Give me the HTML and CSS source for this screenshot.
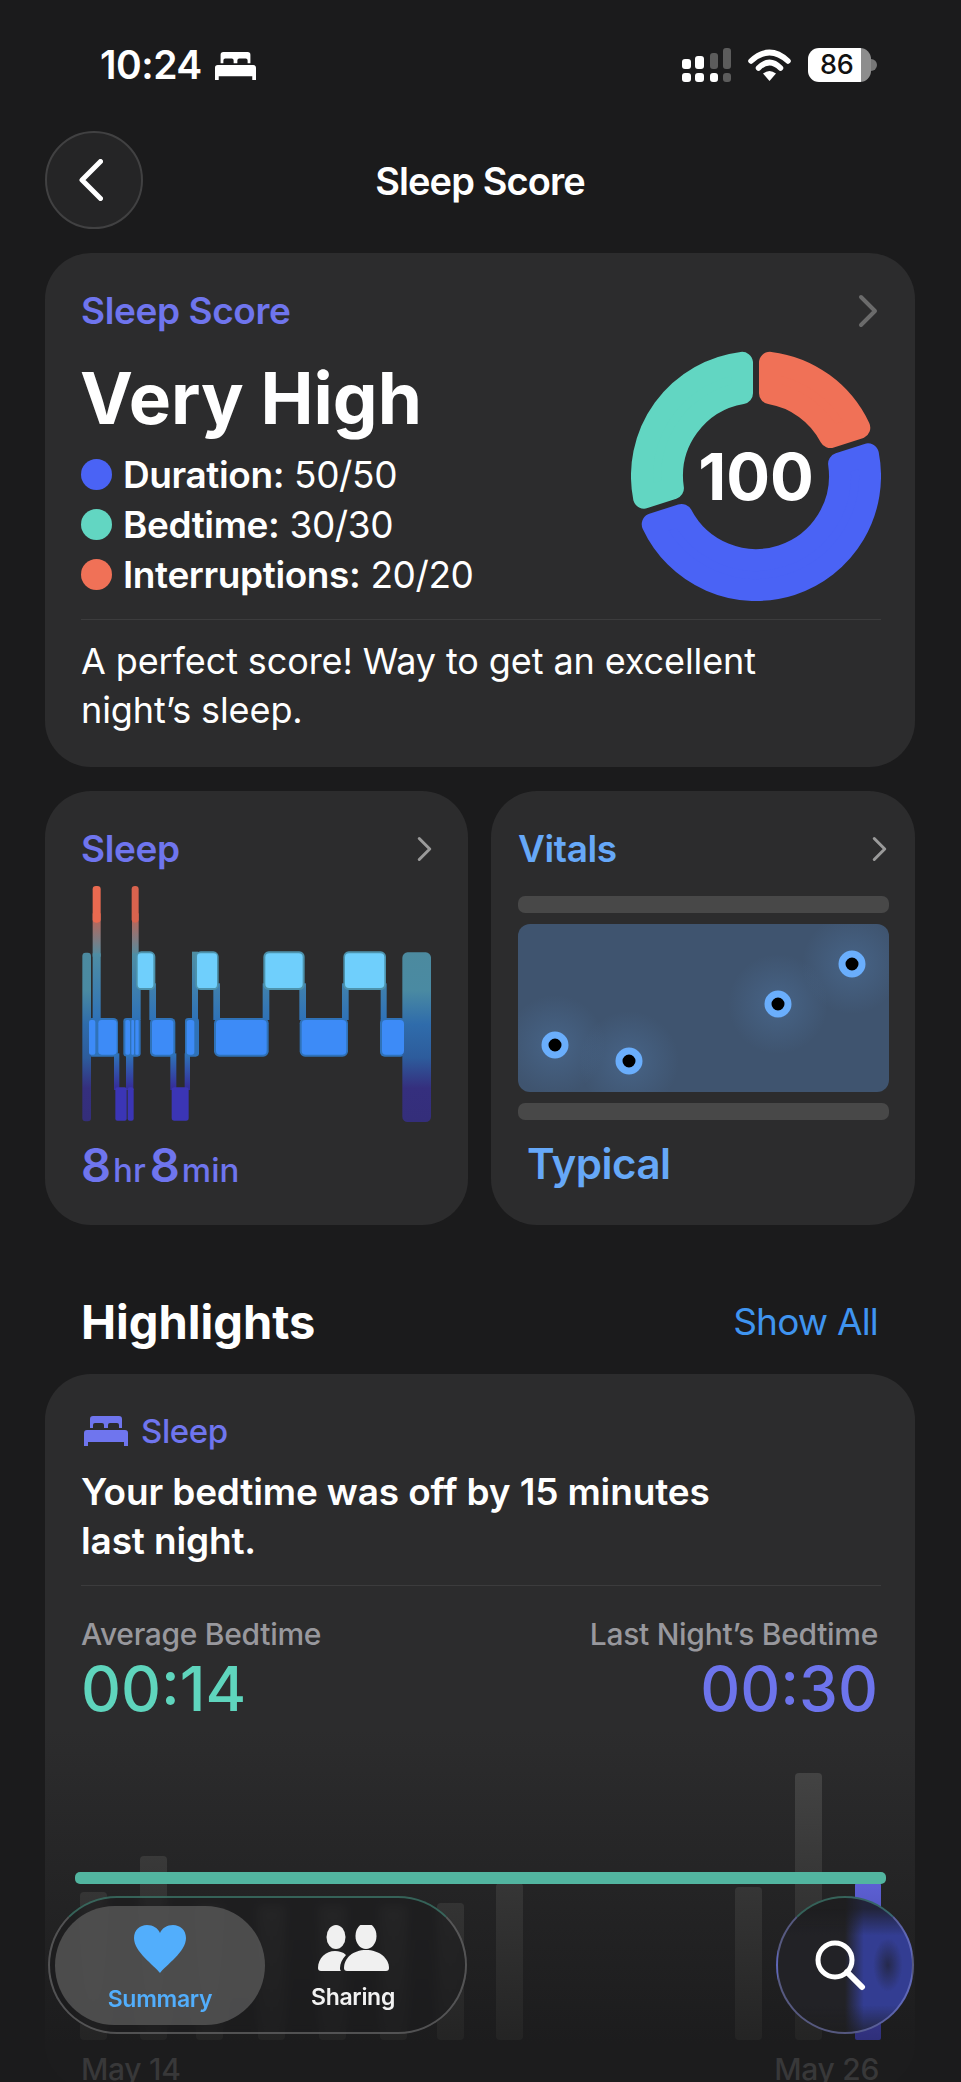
FILE: index.html
```html
<!DOCTYPE html>
<html lang="en">
<head>
    <meta charset="UTF-8">
    <meta name="viewport" content="width=device-width, initial-scale=1.0">
    <title>Sleep Score</title>
    <link rel="stylesheet" href="styles.css">
</head>
<body>
<svg class="icon-defs" width="0" height="0">
    <symbol id="bed" viewBox="0 0 44 30">
        <path d="M6 3a3 3 0 0 1 3-3h26a3 3 0 0 1 3 3v9h-3V9a2 2 0 0 0-2-2h-7a2 2 0 0 0-2 2v3h-4V9a2 2 0 0 0-2-2h-7a2 2 0 0 0-2 2v3H6z"/>
        <path d="M3 14h38a3 3 0 0 1 3 3v13h-4v-4H4v4H0V17a3 3 0 0 1 3-3z"/>
    </symbol>
    <symbol id="chevron" viewBox="0 0 20 34">
        <path d="M3 3l14 14L3 31" fill="none" stroke="currentColor" stroke-width="4" stroke-linecap="round" stroke-linejoin="round"/>
    </symbol>
</svg>

<div class="page">
    <div class="status-bar">
        <div class="status-left">
            <span class="clock">10:24</span>
            <svg class="status-bed"><use href="#bed"/></svg>
        </div>
        <div class="status-right">
            <svg class="signal" viewBox="0 0 49 34">
                <rect x="0" y="11" width="9" height="10" rx="3" fill="#fff"/>
                <rect x="13" y="8" width="9" height="13" rx="3" fill="#fff"/>
                <rect x="28" y="5" width="8" height="16" rx="3" fill="#5c5c5c"/>
                <rect x="41" y="0" width="8" height="21" rx="3" fill="#5c5c5c"/>
                <rect x="0" y="25" width="9" height="9" rx="3" fill="#fff"/>
                <rect x="13" y="25" width="9" height="9" rx="3" fill="#fff"/>
                <rect x="28" y="25" width="8" height="9" rx="3" fill="#fff"/>
                <rect x="41" y="25" width="8" height="9" rx="3" fill="#5c5c5c"/>
            </svg>
            <svg class="wifi" viewBox="0 0 43 32">
                <path d="M3 12Q21.500 -5 40 12" fill="none" stroke="#fff" stroke-width="5.500" stroke-linecap="round"/>
                <path d="M10.500 19Q21.500 8 32.500 19" fill="none" stroke="#fff" stroke-width="5.500" stroke-linecap="round"/>
                <path d="M21.500 32L15 24.500Q21.500 19.500 28 24.500Z" fill="#fff"/>
            </svg>
            <div class="battery">
                <div class="battery-body">86</div>
                <div class="battery-nub"></div>
            </div>
        </div>
    </div>

    <div class="nav">
        <div class="back-button">
            <svg width="24" height="42" viewBox="0 0 24 42"><path d="M21.500 2.500L3 21l18.500 18.500" fill="none" stroke="#fff" stroke-width="5" stroke-linecap="round" stroke-linejoin="round"/></svg>
        </div>
        <div class="nav-title">Sleep Score</div>
    </div>

    <section class="card score-card">
        <div class="card-head">
            <span class="card-label purple">Sleep Score</span>
            <svg class="chevron-big"><use href="#chevron"/></svg>
        </div>
        <div class="score-row">
            <div class="score-info">
                <div class="score-title">Very High</div>
                <div class="legend-row"><span class="dot dot-blue"></span><b>Duration:</b> 50/50</div>
                <div class="legend-row"><span class="dot dot-teal"></span><b>Bedtime:</b> 30/30</div>
                <div class="legend-row"><span class="dot dot-orange"></span><b>Interruptions:</b> 20/20</div>
            </div>
            <div class="ring">
                <svg width="250" height="250" viewBox="0 0 250 250" stroke-width="22" stroke-linejoin="round">
                    <path fill="#62d6c2" stroke="#62d6c2" d="M13.070 146.660A114 114 0 0 1 111.010 11.860L111.010 42.180A84 84 0 0 0 41.910 137.280Z"/>
                    <path fill="#f07157" stroke="#f07157" d="M138.990 11.860A114 114 0 0 1 228.270 76.730L199.450 86.090A84 84 0 0 0 138.990 42.180Z"/>
                    <path fill="#4a63f5" stroke="#4a63f5" d="M236.930 103.340A114 114 0 0 1 21.730 173.270L50.550 163.910A84 84 0 0 0 208.090 112.720Z"/>
                </svg>
                <div class="ring-value">100</div>
            </div>
        </div>
        <div class="divider score-divider"></div>
        <p class="score-text">A perfect score! Way to get an excellent<br>night’s sleep.</p>
    </section>

    <div class="tiles">
        <section class="card tile sleep-tile">
            <div class="card-head tile-head">
                <span class="card-label purple">Sleep</span>
                <svg class="chevron-small"><use href="#chevron"/></svg>
            </div>
            <svg class="hypnogram" width="380" height="270" viewBox="0 0 1140 810">
                <defs>
                    <linearGradient id="link-top" gradientUnits="userSpaceOnUse" x1="0" y1="250" x2="0" y2="450">
                        <stop offset="0" stop-color="#4f8ea3"/>
                        <stop offset="1" stop-color="#2f72b8"/>
                    </linearGradient>
                    <linearGradient id="link-low" gradientUnits="userSpaceOnUse" x1="0" y1="555" x2="0" y2="650">
                        <stop offset="0" stop-color="#2f72b8"/>
                        <stop offset="1" stop-color="#35309a"/>
                    </linearGradient>
                    <linearGradient id="link-wake" gradientUnits="userSpaceOnUse" x1="0" y1="130" x2="0" y2="260">
                        <stop offset="0" stop-color="#c9604e"/>
                        <stop offset="1" stop-color="#4f8ea3"/>
                    </linearGradient>
                    <linearGradient id="side-col" gradientUnits="userSpaceOnUse" x1="0" y1="250" x2="0" y2="755">
                        <stop offset="0" stop-color="#4c8a9f"/>
                        <stop offset=".22" stop-color="#4a8aa2"/>
                        <stop offset=".42" stop-color="#2f6cab"/>
                        <stop offset=".62" stop-color="#2d5c9c"/>
                        <stop offset=".8" stop-color="#352f7e"/>
                        <stop offset="1" stop-color="#342e7a"/>
                    </linearGradient>
                </defs>
                <!-- stage changes -->
                <g fill="url(#link-wake)">
                    <rect x="68" y="130" width="24" height="130"/>
                    <rect x="186" y="130" width="20" height="130"/>
                </g>
                <g fill="url(#link-top)">
                    <rect x="68" y="250" width="24" height="200"/>
                    <rect x="186" y="250" width="26" height="200"/>
                    <rect x="238" y="340" width="20" height="110"/>
                    <rect x="366" y="245" width="18" height="205"/>
                    <rect x="430" y="340" width="20" height="110"/>
                    <rect x="578" y="340" width="20" height="110"/>
                    <rect x="688" y="340" width="20" height="110"/>
                    <rect x="816" y="340" width="20" height="110"/>
                    <rect x="932" y="340" width="18" height="110"/>
                </g>
                <g fill="url(#link-low)">
                    <rect x="132" y="550" width="16" height="110"/>
                    <rect x="168" y="550" width="22" height="110"/>
                    <rect x="301" y="550" width="18" height="110"/>
                    <rect x="344" y="550" width="16" height="110"/>
                </g>
                <!-- halos round the blocks -->
                <g fill="#4d93ad">
                    <rect x="198" y="244" width="58" height="116" rx="16"/>
                    <rect x="376" y="244" width="70" height="116" rx="16"/>
                    <rect x="580" y="244" width="124" height="116" rx="16"/>
                    <rect x="820" y="244" width="128" height="116" rx="16"/>
                </g>
                <g fill="#2f72b8">
                    <rect x="52" y="444" width="92" height="116" rx="14"/>
                    <rect x="160" y="444" width="52" height="116" rx="10"/>
                    <rect x="240" y="444" width="76" height="116" rx="14"/>
                    <rect x="345" y="444" width="42" height="116" rx="10"/>
                    <rect x="432" y="444" width="164" height="116" rx="16"/>
                    <rect x="689" y="444" width="145" height="116" rx="16"/>
                    <rect x="930" y="444" width="76" height="116" rx="14"/>
                </g>
                <!-- stages -->
                <rect x="37" y="248" width="26" height="506" rx="10" fill="url(#side-col)"/>
                <rect x="997" y="247" width="86" height="509" rx="16" fill="url(#side-col)"/>
                <rect x="68" y="48" width="24" height="110" rx="10" fill="#ea6a50"/>
                <rect x="185" y="48" width="21" height="110" rx="10" fill="#d9634e"/>
                <g fill="#6fcffc">
                    <rect x="203" y="250" width="47" height="104" rx="10"/>
                    <rect x="381" y="250" width="60" height="104" rx="10"/>
                    <rect x="586" y="250" width="112" height="104" rx="12"/>
                    <rect x="825" y="250" width="118" height="104" rx="12"/>
                </g>
                <g fill="#3d8bf7">
                    <rect x="57" y="450" width="19" height="104" rx="6"/>
                    <rect x="85" y="450" width="55" height="104" rx="10"/>
                    <rect x="166" y="450" width="14" height="104" rx="5"/>
                    <rect x="184" y="450" width="8" height="104" rx="3"/>
                    <rect x="196" y="450" width="10" height="104" rx="3"/>
                    <rect x="246" y="450" width="64" height="104" rx="10"/>
                    <rect x="350" y="450" width="23" height="104" rx="8"/>
                    <rect x="438" y="450" width="152" height="104" rx="12"/>
                    <rect x="695" y="450" width="134" height="104" rx="12"/>
                    <rect x="936" y="450" width="66" height="104" rx="12"/>
                </g>
                <g fill="#3b35b5">
                    <rect x="136" y="652" width="34" height="100" rx="6"/>
                    <rect x="173" y="652" width="18" height="100" rx="6"/>
                    <rect x="305" y="652" width="51" height="100" rx="8"/>
                </g>
            </svg>
            <div class="duration purple"><span class="num">8</span><span class="unit">hr</span> <span class="num">8</span><span class="unit">min</span></div>
        </section>

        <section class="card tile vitals-tile">
            <div class="card-head tile-head">
                <span class="card-label sky">Vitals</span>
                <svg class="chevron-small"><use href="#chevron"/></svg>
            </div>
            <div class="range-bar"></div>
            <svg class="vitals-plot" width="371" height="168" viewBox="0 0 371 168">
                <defs>
                    <radialGradient id="glow">
                        <stop offset="0" stop-color="#5b8cc4" stop-opacity=".28"/>
                        <stop offset="1" stop-color="#5b8cc4" stop-opacity="0"/>
                    </radialGradient>
                    <clipPath id="plot-clip"><rect width="371" height="168" rx="12"/></clipPath>
                </defs>
                <rect width="371" height="168" rx="12" fill="#3f546f"/>
                <g clip-path="url(#plot-clip)" fill="url(#glow)">
                    <circle cx="37" cy="121" r="50"/>
                    <circle cx="111" cy="137" r="50"/>
                    <circle cx="260" cy="80" r="50"/>
                    <circle cx="334" cy="40" r="50"/>
                </g>
                <g fill="#000" stroke="#6aaefc" stroke-width="7">
                    <circle cx="37" cy="121" r="10"/>
                    <circle cx="111" cy="137" r="10"/>
                    <circle cx="260" cy="80" r="10"/>
                    <circle cx="334" cy="40" r="10"/>
                </g>
            </svg>
            <div class="range-bar range-bar-low"></div>
            <div class="vitals-state sky">Typical</div>
        </section>
    </div>

    <div class="section-head">
        <h2>Highlights</h2>
        <span class="show-all">Show All</span>
    </div>

    <section class="card highlight-card">
        <div class="highlight-tag purple">
            <svg class="tag-bed"><use href="#bed"/></svg>
            <span>Sleep</span>
        </div>
        <p class="highlight-title">Your bedtime was off by 15 minutes<br>last night.</p>
        <div class="divider highlight-divider"></div>
        <div class="compare-row">
            <div>
                <div class="compare-label">Average Bedtime</div>
                <div class="compare-value teal">00:14</div>
            </div>
            <div class="compare-right">
                <div class="compare-label">Last Night’s Bedtime</div>
                <div class="compare-value violet">00:30</div>
            </div>
        </div>
        <svg class="bed-chart" width="820" height="322" viewBox="0 0 820 322">
            <defs>
                <linearGradient id="bar-gray" gradientUnits="userSpaceOnUse" x1="0" y1="49" x2="0" y2="316">
                    <stop offset="0" stop-color="#434343"/>
                    <stop offset=".5" stop-color="#333333"/>
                    <stop offset="1" stop-color="#242424"/>
                </linearGradient>
                <linearGradient id="bar-blue" gradientUnits="userSpaceOnUse" x1="0" y1="159" x2="0" y2="316">
                    <stop offset="0" stop-color="#5d60d4"/>
                    <stop offset="1" stop-color="#2f2f7a"/>
                </linearGradient>
            </defs>
            <g fill="url(#bar-gray)">
                <rect x="10" y="168" width="27" height="148" rx="4"/>
                <rect x="70" y="132" width="27" height="184" rx="4"/>
                <rect x="126" y="181" width="27" height="135" rx="4"/>
                <rect x="188" y="181" width="27" height="135" rx="4"/>
                <rect x="249" y="181" width="27" height="135" rx="4"/>
                <rect x="310" y="181" width="27" height="135" rx="4"/>
                <rect x="367" y="179" width="27" height="137" rx="4"/>
                <rect x="426" y="159" width="27" height="157" rx="4"/>
                <rect x="665" y="163" width="27" height="153" rx="4"/>
                <rect x="725" y="49" width="27" height="267" rx="4"/>
            </g>
            <rect x="785" y="159" width="26" height="157" rx="2" fill="url(#bar-blue)"/>
            <rect x="5" y="148" width="811" height="12" rx="5" fill="#52b5a0"/>
        </svg>
        <div class="chart-dates">
            <span>May 14</span>
            <span>May 26</span>
        </div>
    </section>

    <nav class="tab-bar">
        <div class="tab tab-active">
            <svg width="52" height="48" viewBox="0 0 52 48"><path fill="#52aefc" d="M26 48C20 40 0 27 0 13 0 5 6 0 13 0c6 0 11 3 13 8 2-5 7-8 13-8 7 0 13 5 13 13 0 14-20 27-26 35z"/></svg>
            <span>Summary</span>
        </div>
        <div class="tab tab-sharing">
            <svg width="71" height="46" viewBox="0 0 71 46" fill="#f0f0f0">
                <ellipse cx="18" cy="12" rx="9.500" ry="12"/>
                <ellipse cx="48" cy="11" rx="10.500" ry="13"/>
                <path d="M3 46c-2 0-3-1-3-3 0-10 8-17 17-17 4 0 8 1 11 4-4 4-6 9-6 13 0 1 0 2 1 3z"/>
                <path d="M29 46c-2 0-3-1-3-3 0-10 9-18 22-18s23 8 23 18c0 2-1 3-3 3z"/>
            </svg>
            <span>Sharing</span>
        </div>
    </nav>
    <div class="search-button">
        <svg width="52" height="52" viewBox="0 0 52 52"><circle cx="21" cy="21" r="17" fill="none" stroke="#fff" stroke-width="5"/><path d="M33 33l15 15" fill="none" stroke="#fff" stroke-width="6" stroke-linecap="round"/></svg>
    </div>
</div>
</body>
</html>
```

FILE: styles.css
```css
* {
    margin: 0;
    padding: 0;
    box-sizing: border-box;
}

html, body {
    height: 2082px;
    overflow: hidden;
}

body {
    font-family: 'Inter', 'Noto Sans', sans-serif;
    background-color: #1b1b1c;
    color: #fff;
}

.icon-defs {
    display: block;
    position: absolute;
}

.page {
    position: relative;
    height: 2082px;
    padding: 47px 46px 0 45px;
    overflow: hidden;
}

/* status bar */
.status-bar {
    display: flex;
    justify-content: space-between;
    align-items: center;
    height: 36px;
    padding: 0 38px 0 55px;
}

.status-left {
    display: flex;
    align-items: center;
    gap: 13px;
}

.clock {
    font-size: 39px;
    font-weight: 600;
    letter-spacing: -.5px;
    line-height: 36px;
}

.status-bed {
    width: 41px;
    height: 28px;
    fill: #fff;
    margin-top: 2px;
}

.status-right {
    display: flex;
    align-items: center;
}

.signal {
    width: 49px;
    height: 34px;
}

.wifi {
    width: 43px;
    height: 32px;
    margin-left: 17px;
}

.battery {
    display: flex;
    align-items: center;
    margin-left: 17px;
}

.battery-body {
    width: 63px;
    height: 34px;
    border-radius: 11px;
    background: linear-gradient(90deg, #fff 0, #fff 84%, #8d8d8d 84%);
    color: #111;
    font-size: 27px;
    font-weight: 500;
    line-height: 34px;
    padding-left: 12px;
    letter-spacing: -.3px;
}

.battery-nub {
    width: 6px;
    height: 12px;
    border-radius: 0 6px 6px 0;
    background-color: #777;
}

/* nav */
.nav {
    display: grid;
    grid-template-columns: 98px 1fr 98px;
    align-items: center;
    margin-top: 48px;
}

.back-button {
    grid-column: 1;
    grid-row: 1;
    width: 98px;
    height: 98px;
    border-radius: 50%;
    background-color: #252526;
    border: 2px solid #414142;
    display: flex;
    align-items: center;
    justify-content: center;
    padding-right: 6px;
}

.nav-title {
    grid-column: 2;
    grid-row: 1;
    text-align: center;
    font-size: 38px;
    font-weight: 600;
    letter-spacing: -.9px;
    padding-top: 2px;
}

/* cards */
.card {
    background-color: #2c2c2d;
    border-radius: 46px;
}

.score-card {
    margin-top: 24px;
    padding: 38px 34px 29px 36px;
}

.card-head {
    display: flex;
    justify-content: space-between;
    align-items: center;
    height: 40px;
}

.card-label {
    font-size: 37px;
    font-weight: 600;
    letter-spacing: -.4px;
    line-height: 40px;
}

.purple {
    color: #6f75ee;
}

.sky {
    color: #66a8f8;
}

.teal {
    color: #5fd5bd;
}

.violet {
    color: #6d74ec;
}

.chevron-big {
    width: 20px;
    height: 34px;
    color: #6b6b6b;
    margin-right: 3px;
}

.chevron-small {
    width: 15px;
    height: 26px;
    color: #9a9a9a;
}

.score-row {
    display: flex;
    justify-content: space-between;
    margin-top: 20px;
}

.score-title {
    font-size: 71px;
    font-weight: 700;
    line-height: 72px;
    margin-top: 11px;
    margin-bottom: 15px;
    margin-left: -1px;
}

.legend-row {
    display: flex;
    align-items: center;
    height: 50px;
    font-size: 37px;
    font-weight: 400;
    letter-spacing: -.4px;
    white-space: pre;
}

.legend-row b {
    font-weight: 600;
}

.dot {
    width: 31px;
    height: 31px;
    border-radius: 50%;
    margin-right: 11px;
}

.dot-blue {
    background-color: #4a63f5;
}

.dot-teal {
    background-color: #62d6c2;
}

.dot-orange {
    background-color: #f07157;
}

.ring {
    position: relative;
    width: 250px;
    height: 250px;
}

.ring-value {
    position: absolute;
    inset: 0;
    display: flex;
    align-items: center;
    justify-content: center;
    font-size: 65px;
    font-weight: 700;
}

.divider {
    height: 1px;
    background-color: #3c3c3d;
}

.score-divider {
    margin-top: 18px;
}

.score-text {
    margin-top: 17px;
    margin-bottom: 3px;
    font-size: 36px;
    line-height: 49px;
    letter-spacing: -.1px;
}

/* tiles */
.tiles {
    display: grid;
    grid-template-columns: 423px 424px;
    gap: 23px;
    margin-top: 24px;
}

.tile {
    height: 434px;
    padding-top: 38px;
}

.sleep-tile {
    padding-left: 36px;
    padding-right: 36px;
}

.vitals-tile {
    padding-left: 27px;
    padding-right: 26px;
}

.vitals-tile .tile-head {
    padding-right: 2px;
}

.hypnogram {
    display: block;
    margin: 1px 0 0 -11px;
}

.duration {
    height: 50px;
    line-height: 50px;
    font-weight: 600;
    white-space: nowrap;
}

.duration .num {
    font-size: 47px;
}

.duration .unit {
    font-size: 33px;
    font-weight: 500;
    margin-left: 2px;
}

.range-bar {
    height: 17px;
    border-radius: 7px;
    background-color: #484848;
    margin-top: 27px;
}

.range-bar-low {
    margin-top: 11px;
}

.vitals-plot {
    display: block;
    margin-top: 11px;
}

.vitals-state {
    margin-top: 19px;
    padding-left: 9px;
    font-size: 42px;
    font-weight: 600;
    line-height: 50px;
    letter-spacing: -.5px;
}

/* highlights */
.section-head {
    display: flex;
    justify-content: space-between;
    align-items: center;
    height: 149px;
    padding: 43px 37px 0 36px;
}

.section-head h2 {
    font-size: 47px;
    font-weight: 700;
}

.show-all {
    font-size: 37px;
    color: #3f94ef;
    letter-spacing: -.8px;
}

.highlight-card {
    padding: 37px 34px 0 36px;
    background: linear-gradient(#2c2c2d 0, #2c2c2d 356px, #1c1c1d 670px);
}

.highlight-tag {
    display: flex;
    align-items: center;
    gap: 13px;
    height: 40px;
    font-size: 33px;
    font-weight: 500;
    letter-spacing: -.4px;
}

.tag-bed {
    width: 44px;
    height: 30px;
    fill: #6f75ee;
    margin-left: 3px;
}

.highlight-title {
    margin-top: 16px;
    font-size: 37px;
    font-weight: 600;
    line-height: 49px;
    letter-spacing: -.15px;
}

.highlight-divider {
    margin-top: 20px;
}

.compare-row {
    display: flex;
    justify-content: space-between;
    margin-top: 28px;
    padding-right: 3px;
}

.compare-right {
    text-align: right;
}

.compare-label {
    font-size: 30px;
    font-weight: 500;
    line-height: 40px;
    color: #98989d;
    letter-spacing: -.3px;
}

.compare-value {
    font-size: 62px;
    font-weight: 500;
    line-height: 70px;
}

.bed-chart {
    display: block;
    margin-left: -11px;
}

.chart-dates {
    display: flex;
    justify-content: space-between;
    margin-top: 3px;
    padding-right: 2px;
    font-size: 30px;
    font-weight: 500;
    line-height: 40px;
    color: #383839;
    letter-spacing: -.3px;
}

/* floating tab bar */
.tab-bar {
    position: absolute;
    left: 48px;
    top: 1896px;
    width: 419px;
    height: 138px;
    border-radius: 69px;
    border: 2px solid rgba(255, 255, 255, .24);
    border-top-color: rgba(82, 181, 160, .45);
    background-color: rgba(28, 28, 29, .62);
    backdrop-filter: blur(5px);
    display: flex;
    padding: 8px 0 7px 5px;
}

.tab {
    width: 172px;
    display: flex;
    flex-direction: column;
    align-items: center;
    padding-top: 19px;
    font-size: 23px;
    font-weight: 600;
    letter-spacing: -.3px;
    color: #f2f2f2;
}

.tab span {
    margin-top: 12px;
}

.tab-active {
    width: 210px;
    border-radius: 60px;
    background-color: rgba(92, 92, 92, .75);
    color: #52aefc;
}

.tab-sharing {
    margin-left: 2px;
}

.search-button {
    position: absolute;
    left: 776px;
    top: 1896px;
    width: 138px;
    height: 138px;
    border-radius: 50%;
    border: 2px solid rgba(140, 145, 220, .5);
    border-top-color: rgba(82, 181, 160, .45);
    background:
        radial-gradient(ellipse 11% 20% at 82% 50%, rgba(28, 28, 30, .6), rgba(28, 28, 30, 0)),
        linear-gradient(rgba(28, 28, 29, .75) 8%, rgba(28, 28, 29, 0) 28%, rgba(28, 28, 29, 0) 80%, rgba(28, 28, 29, .6) 98%),
        linear-gradient(90deg, #222226 50%, #333d92 64%, #333d92 100%);
    display: flex;
    align-items: center;
    justify-content: center;
    padding: 0 10px 0 0;
}
```
